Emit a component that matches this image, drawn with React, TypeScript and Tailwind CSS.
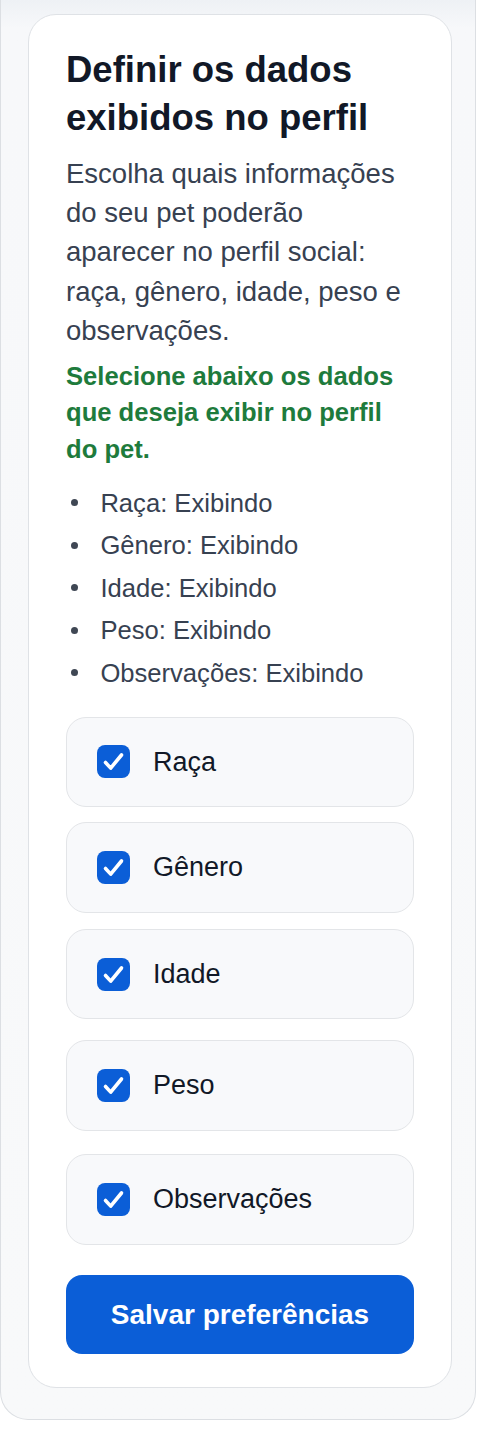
const campos = [
  { label: 'Raça', gap: 'mt-[22.6px]' },
  { label: 'Gênero', gap: 'mt-[15px]' },
  { label: 'Idade', gap: 'mt-[16.3px]' },
  { label: 'Peso', gap: 'mt-[20.7px]' },
  { label: 'Observações', gap: 'mt-[23.6px]' },
];

function CheckIcon() {
  return (
    <span className="block h-[33px] w-[33px] shrink-0 rounded-[8px] bg-[#0b5ed7]">
      <svg viewBox="0 0 33 33" className="h-[33px] w-[33px]" fill="none">
        <path d="M8.5 17.5l5.2 5.6L24.5 10" stroke="white" strokeWidth="3.6" strokeLinecap="round" strokeLinejoin="round" />
      </svg>
    </span>
  );
}

export default function App() {
  return (
    <div className="min-h-[1432px] bg-white font-['Liberation_Sans',Arial,sans-serif]">
      <div className="w-[476px] rounded-b-[28px] border border-t-0 border-[#dcdfe3] bg-linear-to-b from-[#eef1f5] via-[#f7f8fa] via-[2%] to-[#f8f9fa] pt-[14px] pb-[31.5px]">
        <div className="ml-[27px] w-[424px] rounded-[28px] border border-[#dfe2e6] bg-white px-[37px] pt-[31.4px] pb-[32.5px]">
          <h1 className="text-[36.5px] leading-[48px] font-bold text-[#111827]">
            Definir os dados exibidos no perfil
          </h1>
          <p className="mt-[11.4px] text-[27.5px] leading-[39.3px] text-[#374151]">
            Escolha quais informações do seu pet poderão aparecer no perfil social: raça, gênero, idade, peso e observações.
          </p>
          <p className="mt-[7.6px] text-[25.6px] leading-[36.5px] font-bold text-[#1e7b3c]">
            Selecione abaixo os dados que deseja exibir no perfil do pet.
          </p>
          <ul className="mt-[14.2px]">
            {campos.map(c => (
              <li key={c.label} className="flex items-center text-[25.6px] leading-[42.5px] text-[#374151]">
                <span className="ml-[4.7px] mr-[22.7px] h-[7px] w-[7px] shrink-0 rounded-full bg-[#3f4754]" />
                {c.label}: Exibindo
              </li>
            ))}
          </ul>
          {campos.map(c => (
            <label
              key={c.label}
              className={`${c.gap} flex h-[90.5px] items-center gap-[23px] rounded-[20px] border border-[#e3e5e8] bg-[#f8f9fb] pl-[30px]`}
            >
              <CheckIcon />
              <span className="text-[27px] text-[#111827]">{c.label}</span>
            </label>
          ))}
          <button className="mt-[30.7px] flex h-[79px] w-full items-center justify-center rounded-[16px] bg-[#0b5ed7] text-[28px] font-bold text-white">
            Salvar preferências
          </button>
        </div>
      </div>
    </div>
  );
}
